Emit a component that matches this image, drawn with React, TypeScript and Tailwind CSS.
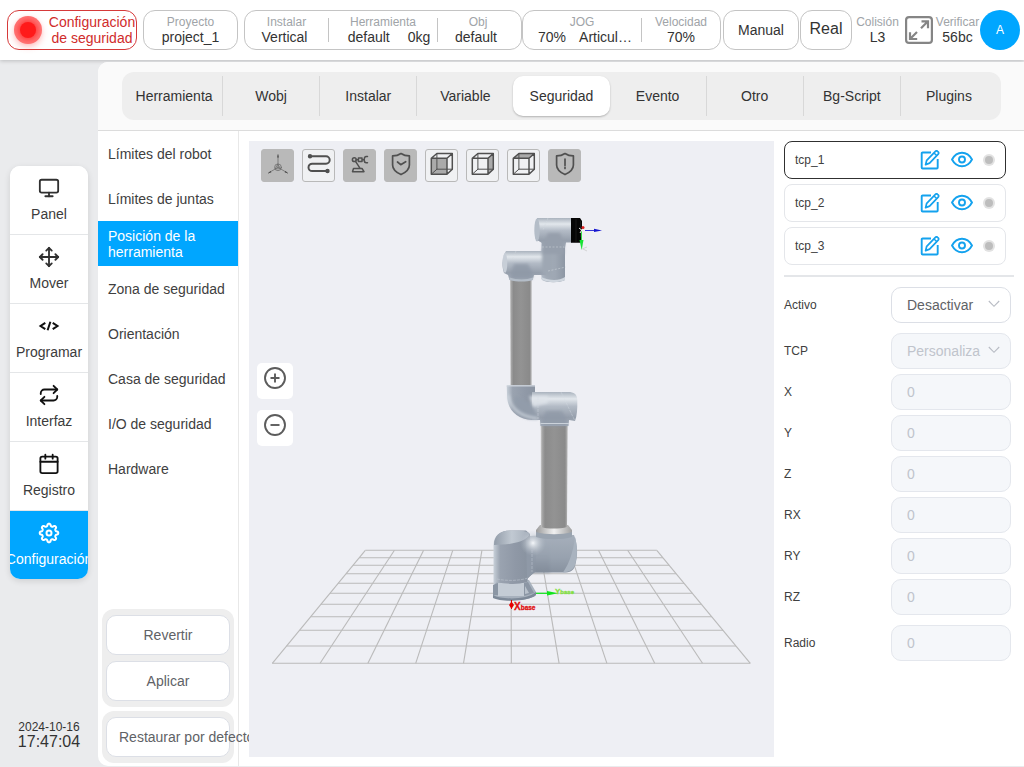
import React from "react";
import { Monitor, Move, Repeat } from "lucide-react";

const tabs = ["Herramienta", "Wobj", "Instalar", "Variable", "Seguridad", "Evento", "Otro", "Bg-Script", "Plugins"];
const menu = [
  "Límites del robot",
  "Límites de juntas",
  "Posición de la herramienta",
  "Zona de seguridad",
  "Orientación",
  "Casa de seguridad",
  "I/O de seguridad",
  "Hardware",
];

function CodeIcon() {
  return (
    <svg width="22" height="22" viewBox="0 0 22 22" fill="none" stroke="#111" strokeWidth="2">
      <path d="M7.300 7.800 2.500 11l4.800 3.200M14.700 7.800 19.500 11l-4.800 3.200M12.400 6.800 9.600 15.200" />
    </svg>
  );
}

function CalendarIcon() {
  return (
    <svg width="22" height="22" viewBox="0 0 24 24" fill="none" stroke="#111" strokeWidth="2" strokeLinecap="round" strokeLinejoin="round">
      <rect x="2.6" y="4" width="18.8" height="18" rx="2" />
      <path d="M2.6 9.500h18.8M8 1.800v4.400M16 1.800v4.400" />
    </svg>
  );
}

const gearPath = (() => {
  const pts: string[] = [];
  for (let i = 0; i < 160; i++) {
    const a = (i / 160) * Math.PI * 2;
    const wave = Math.tanh(1.8 * Math.cos(8 * a));
    const r = 8.1 + 1.2 * wave;
    pts.push(`${(11 + r * Math.cos(a)).toFixed(2)} ${(11 + r * Math.sin(a)).toFixed(2)}`);
  }
  return `M${pts.join("L")}Z`;
})();

function GearIcon() {
  return (
    <svg width="22" height="22" viewBox="0 0 22 22" fill="none" stroke="#fff" strokeWidth="2" strokeLinejoin="round">
      <path d={gearPath} />
      <circle cx="11" cy="11" r="2.500" />
    </svg>
  );
}

const nav = [
  { label: "Panel", icon: <Monitor size={22} color="#303030" /> },
  { label: "Mover", icon: <Move size={22} color="#303030" /> },
  { label: "Programar", icon: <CodeIcon /> },
  { label: "Interfaz", icon: <Repeat size={22} color="#111" /> },
  { label: "Registro", icon: <CalendarIcon /> },
  { label: "Configuración", icon: <GearIcon />, active: true },
];

function Stat({ label, value, className = "" }: { label: string; value: React.ReactNode; className?: string }) {
  return (
    <div className={`text-center whitespace-nowrap ${className}`}>
      <div className="text-xs leading-[15px] text-[#a0a4a8]">{label}</div>
      <div className="text-sm leading-[15px] text-[#333]">{value}</div>
    </div>
  );
}

function Divider() {
  return <div className="h-6 w-px shrink-0 bg-[#c4c4c4]" />;
}

function Header() {
  const box = "flex h-10 shrink-0 items-center rounded-xl border border-[#c4c4c4] bg-white";
  return (
    <header className="flex h-[60px] shrink-0 items-center bg-white pr-1 pl-[7px] shadow-[0_1px_4px_rgba(0,0,0,0.2)]">
      <button className="flex h-10 w-[130px] shrink-0 items-center gap-1.5 rounded-xl border border-[#d63a3a] bg-white pl-1.5 text-sm leading-4 text-[#d02c2c]">
        <span className="flex size-7 shrink-0 items-center justify-center rounded-full bg-[#ff7474] shadow-[0_3px_6px_rgba(255,80,80,0.35)]">
          <span className="size-4 rounded-full bg-[#ff1a1a] shadow-[0_0_5px_2px_#ff3c3c]" />
        </span>
        <span className="w-[88px] shrink-0">Configuración de seguridad</span>
      </button>
      <div className={`${box} ml-1.5 w-[95px] justify-center`}>
        <Stat label="Proyecto" value="project_1" />
      </div>
      <div className={`${box} ml-1.5 w-[278px]`}>
        <Stat className="w-[83px]" label="Instalar" value={<span className="pr-1">Vertical</span>} />
        <Divider />
        <Stat
          className="w-[108px]"
          label="Herramienta"
          value={
            <span className="flex justify-center gap-[18px] pl-3">
              <span>default</span>
              <span>0kg</span>
            </span>
          }
        />
        <Divider />
        <Stat className="w-20" label="Obj" value={<span className="pr-1">default</span>} />
      </div>
      <div className={`${box} w-[199px]`}>
        <Stat
          className="w-[118px]"
          label="JOG"
          value={
            <span className="flex justify-center gap-[13px] pl-1.5">
              <span>70%</span>
              <span>Articul…</span>
            </span>
          }
        />
        <Divider />
        <Stat className="flex-1" label="Velocidad" value="70%" />
      </div>
      <button className={`${box} ml-0.5 w-[76px] justify-center text-sm text-[#333]`}>Manual</button>
      <button className={`${box} ml-px w-[52px] justify-center pb-0.5 text-base text-[#333]`}>Real</button>
      <Stat className="ml-1 w-[43px]" label="Colisión" value="L3" />
      <button aria-label="Pantalla completa" className="ml-1.5 shrink-0">
        <svg width="28" height="28" viewBox="0 0 28 28" fill="none" stroke="#858585" strokeWidth="2.200">
          <rect x="1.100" y="1.100" width="25.800" height="25.800" rx="3" />
          <path d="M16.500 5.300H23v7M22.500 5.800 16 12.300M5 16.300V23h7.200M5.500 22.500l6.500-6.500" />
        </svg>
      </button>
      <Stat className="ml-0.5 w-[45px]" label="Verificar" value="56bc" />
      <button className="ml-auto size-10 shrink-0 rounded-full bg-[#00a6ff] text-xs text-white">A</button>
    </header>
  );
}

function Sidebar() {
  return (
    <aside className="flex w-[98px] shrink-0 flex-col items-center">
      <nav className="mt-[106px] w-[78px] overflow-hidden rounded-[10px] bg-white shadow-[0_2px_6px_rgba(0,0,0,0.12)]">
        {nav.map((n) => (
          <button
            key={n.label}
            className={
              n.active
                ? "flex h-[68px] w-full flex-col items-center bg-[#00a6ff] pt-[11px] text-sm text-white"
                : "flex h-[69px] w-full flex-col items-center border-b border-[#e4e6e8] bg-white pt-[11px] text-sm text-[#3c3c3c]"
            }
          >
            {n.icon}
            <span className="mt-[5px] leading-5">{n.label}</span>
          </button>
        ))}
      </nav>
      <div className="mt-auto pb-[17px] text-center text-[#333]">
        <div className="text-xs leading-[14px]">2024-10-16</div>
        <div className="text-base leading-4">17:47:04</div>
      </div>
    </aside>
  );
}

function SubMenu() {
  const btn = "block h-10 w-full rounded-[10px] border border-[#dcdfe6] bg-white text-sm text-[#606266] whitespace-nowrap";
  return (
    <div className="flex w-[141px] shrink-0 flex-col border-r border-[#e8e8e8]">
      <nav className="flex flex-col">
        {menu.map((m, i) => (
          <button
            key={m}
            className={
              i === 2
                ? "h-[45px] bg-[#00a6ff] px-2.5 text-left text-sm leading-4 text-white"
                : "h-[45px] px-2.5 text-left text-sm leading-4 text-[#404040]"
            }
          >
            {m}
          </button>
        ))}
      </nav>
      <div className="mx-1 mt-auto flex flex-col gap-1.5 rounded-xl bg-[#eee] px-1 py-1.5">
        <button className={btn}>Revertir</button>
        <button className={btn}>Aplicar</button>
      </div>
      <div className="mx-1 mt-1 mb-[3px] rounded-xl bg-[#eee] px-1 py-1.5">
        <button className={`${btn} pl-3 text-left`}>Restaurar por defecto</button>
      </div>
    </div>
  );
}

function Cube({ face }: { face: "front" | "right" | "top" }) {
  const faces = {
    front: "M6.3 9.3H22v15.9H6.3z",
    right: "M22 9.3l5.3-4.8v15.7L22 25.2z",
    top: "M6.3 9.3l5.6-4.8h15.4L22 9.3z",
  };
  return (
    <g strokeWidth="1.5">
      <path d={faces[face]} fill="#aaa" stroke="none" />
      <path d="M11.9 4.500v15.700h15.400M6.300 25.200l5.600-5" strokeWidth="1" />
      <path d="M6.300 9.300H22v15.900H6.300zM6.300 9.300l5.600-4.800h15.400L22 9.300M27.300 4.500v15.700L22 25.200" />
    </g>
  );
}

const shield = "M17 4.5c-2.6 1.8-5.4 2.4-8.4 2.4v9c0 4.6 3.6 7.4 8.4 9.7 4.800-2.300 8.400-5.100 8.400-9.700v-9c-3 0-5.800-.6-8.400-2.400z";

const tools = [
  {
    name: "Ejes",
    on: true,
    icon: (
      <g strokeWidth="0.7" stroke="#666">
        <path d="M17 18.300V6M17 18.300l-9.500 5.700M17 18.300l9.500 5.700" />
        <circle cx="17" cy="18.300" r="3.400" />
        <path d="M14.500 19.800h5L17 15.500z" />
        <path d="M17 4.800l-.8 3.700h1.600zM6.800 24.500l3.600-1.200-.9-1.400zM27.200 24.500l-3.600-1.200.9-1.400z" fill="#444" stroke="none" />
      </g>
    ),
  },
  {
    name: "Trayectoria",
    on: false,
    icon: (
      <g strokeWidth="2">
        <path d="M8 7.300h16a3.700 3.700 0 0 1 0 7.400H10.200a3.700 3.700 0 0 0 0 7.400H25.500" />
        <circle cx="8" cy="7.300" r="1.200" fill="#505050" />
        <circle cx="25.500" cy="22" r="1.200" fill="#505050" />
      </g>
    ),
  },
  {
    name: "Robot",
    on: true,
    icon: (
      <g strokeWidth="1.500">
        <path d="M10.500 19.500h8.500l2 3.200H9.500zM12.500 12.400l4.300 6.500" />
        <circle cx="11.300" cy="10.700" r="1.900" />
        <path d="M13.200 10.700h2M15.400 9h3.600v3.500h-3.600zM19.200 10.700h2M24.500 7.600h-1.200c-1.300 0-2.100 1-2.100 3.100s.8 3.100 2.100 3.100h1.200" />
      </g>
    ),
  },
  { name: "Escudo", on: true, icon: <path d={`${shield}M13.500 13l3.200 2.700 5-3`} strokeWidth="1.700" /> },
  { name: "Vista frontal", on: false, icon: <Cube face="front" /> },
  { name: "Vista lateral", on: false, icon: <Cube face="right" /> },
  { name: "Vista superior", on: false, icon: <Cube face="top" /> },
  { name: "Alerta", on: true, icon: <path d={`${shield}M17 10v6.500M17 18.300v1.200`} strokeWidth="1.700" /> },
];

const gridRows = [550.3, 557.7, 565.3, 573.7, 583.3, 593.3, 604.3, 616.7, 630.3, 646, 663.3];

function Scene() {
  return (
    <svg className="absolute inset-0 h-full w-full" viewBox="249 141 525 616" aria-label="Vista 3D del robot">
      <defs>
        <linearGradient id="tube" x1="0" x2="1" y1="0" y2="0">
          <stop offset="0" stopColor="#c9c9c9" />
          <stop offset=".07" stopColor="#a2a2a2" />
          <stop offset=".16" stopColor="#8b8b8b" />
          <stop offset=".5" stopColor="#939393" />
          <stop offset=".9" stopColor="#8a8a8a" />
          <stop offset="1" stopColor="#b9b9b9" />
        </linearGradient>
        <linearGradient id="horiz" x1="0" x2="0" y1="0" y2="1">
          <stop offset="0" stopColor="#aab3be" />
          <stop offset=".2" stopColor="#e2e7ec" />
          <stop offset=".42" stopColor="#b3bbc6" />
          <stop offset=".75" stopColor="#959eab" />
          <stop offset="1" stopColor="#a4adb9" />
        </linearGradient>
        <linearGradient id="vert" x1="0" x2="1" y1="0" y2="0">
          <stop offset="0" stopColor="#b4bdc8" />
          <stop offset=".2" stopColor="#a3acb8" />
          <stop offset=".6" stopColor="#9ea7b3" />
          <stop offset="1" stopColor="#8d97a4" />
        </linearGradient>
        <linearGradient id="column" x1="0" x2="1" y1="0" y2="0">
          <stop offset="0" stopColor="#c8d0d9" />
          <stop offset=".18" stopColor="#9aa3b0" />
          <stop offset=".6" stopColor="#8f98a6" />
          <stop offset="1" stopColor="#88929f" />
        </linearGradient>
        <linearGradient id="shoulder" x1="0" x2="0" y1="0" y2="1">
          <stop offset="0" stopColor="#a6afbb" />
          <stop offset=".5" stopColor="#98a2af" />
          <stop offset="1" stopColor="#7f8997" />
        </linearGradient>
        <linearGradient id="cap" x1="0" x2="1" y1="0" y2="0">
          <stop offset="0" stopColor="#929ca9" />
          <stop offset=".5" stopColor="#c1c9d2" />
          <stop offset="1" stopColor="#a6afbb" />
        </linearGradient>
        <linearGradient id="collar" x1="0" x2="1" y1="0" y2="0">
          <stop offset="0" stopColor="#9b9b9b" />
          <stop offset=".5" stopColor="#f0f0f0" />
          <stop offset="1" stopColor="#a0a0a0" />
        </linearGradient>
        <radialGradient id="shine">
          <stop offset="0" stopColor="#f4f7fa" />
          <stop offset="1" stopColor="#b4bdc8" stopOpacity="0" />
        </radialGradient>
        <filter id="soft" x="-30%" y="-30%" width="160%" height="160%">
          <feGaussianBlur stdDeviation="1.6" />
        </filter>
      </defs>

      <g stroke="#bababa" strokeWidth="1.100" fill="none">
        {gridRows.map((y) => {
          const t = (y - 550.3) / 113;
          return <line key={y} x1={365.3 - 93 * t} x2={656.8 + 93.5 * t} y1={y} y2={y} />;
        })}
        {Array.from({ length: 11 }, (_, i) => (
          <line key={i} x1={365.3 + 29.15 * i} y1="550.3" x2={272.3 + 47.8 * i} y2="663.3" />
        ))}
      </g>

      {/* base and shoulder */}
      <path d="M497 580L493 586V596C500 602 529 602 536 595V592L529 580z" fill="#a7b1bd" />
      <path d="M493 595C502 600 527 600 536 592V595C529 602 500 602 493 598z" fill="#7d8998" />
      <path d="M498 583H525V596H498z" fill="#c4ccd5" />
      <path d="M493 585l5-2v12h-5zM524 583l4-1 6 11-10 3z" fill="#8b96a4" />
      <path d="M525 586l4 7-4 1z" fill="#b8c1cb" />
      <path d="M526 536L574 535C578 545 578 556 575 566C573 571 570 572.500 564 572.500H534L526 580z" fill="url(#shoulder)" />
      <path d="M575 537C577.500 546 577.500 557 575 565C573 570 569 572 563 572.500C570 562 573 552 575 537z" fill="#a9b3bf" />
      <path d="M493.500 545C494 535 500 530.500 511 530.500H526L530 534V571L527 582C517 585 505 584 497 582L493.500 585z" fill="url(#column)" />
      <path d="M526 540H536V571.500L527 578z" fill="#8f99a7" />
      <path d="M532 536H550V572.500H533z" fill="url(#shoulder)" filter="url(#soft)" opacity=".7" />
      <path d="M494 545C494 535 501 530.500 511 530.500C521 530 530 531 529.500 535C525 542 510 545 494 545z" fill="url(#cap)" />
      <circle cx="533" cy="543" r="13" fill="url(#shine)" />
      <path d="M497 579C506 581 519 581 528 578M532 550V572" stroke="#c3cbd4" strokeWidth=".5" strokeDasharray="3 1" fill="none" />
      <path d="M536 531H572V537C562 540 546 540 536 537z" fill="#9aa4b0" />
      <path d="M540 525H568L572 530V532C562 535 546 535 536 532V530z" fill="url(#collar)" />

      {/* lower arm */}
      <path d="M540.700 424H567.700L567 527C560 529 547 529 541 527z" fill="url(#tube)" />

      {/* elbow */}
      <path d="M506.700 385.500H535V392L540 398V420H532C517 419 507 410 507 395z" fill="url(#column)" />
      <path d="M532 392H568C574 392 577 394 577.300 400C577.500 409 577 416 575 421L569 420L568.500 426H540.500L540 420H532z" fill="url(#horiz)" />
      <path d="M515 396L532 404L538 419H531C520 418 513 410 515 396z" fill="#929caa" filter="url(#soft)" />
      <path d="M529 396H548V403L533 407z" fill="#dfe4ea" filter="url(#soft)" opacity=".8" />
      <path d="M546 411H562L567 420V426H542V419z" fill="#8f99a7" opacity=".75" filter="url(#soft)" />
      <path d="M508.500 395C510 408 520 417 538 418.500" stroke="#d2d9e1" strokeWidth="2" fill="none" filter="url(#soft)" />
      <path d="M540.500 423.500H569M506.700 386H535" stroke="#cbd2da" strokeWidth="1" />
      <path d="M561 392L575 421M538 397V419" stroke="#d5dbe2" strokeWidth=".4" strokeDasharray="3 1" />

      {/* upper arm and wrist */}
      <path d="M510 279H531.700V385H510.500z" fill="url(#tube)" />
      <path d="M541.500 237H565V280C559 283 547 283 542 280L541 273z" fill="url(#vert)" />
      <path d="M506 251H546V275H534L532.700 280H509.500L508 275L504 273C501.500 265 501.500 257 506 251z" fill="url(#horiz)" />
      <path d="M514 264H528L533 274L532 279H511V273z" fill="#8f99a7" opacity=".8" filter="url(#soft)" />
      <path d="M542 250L552 247V278L542 274z" fill="#9ea7b3" filter="url(#soft)" />
      <ellipse cx="505" cy="263" rx="2.300" ry="10" fill="#c7ced7" />
      <path d="M509.500 277.500C517 280 526 280 533 277.500V280C526 282 517 282 509.500 280z" fill="#b4bdc8" />
      <path d="M541 277C550 281 559 281 565 277V280C559 283 547 283 541 279z" fill="#cfd6de" />
      <path d="M537 218H572V242.500H566L565 248H542V243L537 240z" fill="url(#horiz)" />
      <path d="M548 233H560L564 243V254H543V244z" fill="#969fac" filter="url(#soft)" />
      <ellipse cx="537" cy="230" rx="2.700" ry="11.500" fill="#b4bdc8" />
      <path d="M548 218l-5 12M516 251l-4 9M542 247h22M548 271l18-4" stroke="#d2d8df" strokeWidth=".5" strokeDasharray="2 1.500" />
      <path d="M571 218H580L582 221V239L580 242.700H571z" fill="#050505" />
      <path d="M576 219V242M580.500 221v16" stroke="#252525" strokeWidth=".6" />

      {/* tool axes */}
      <path d="M585 230.500H594" stroke="#3535d8" strokeWidth="1" />
      <path d="M594 228.700L602 230.500L594 232z" fill="#1515cf" />
      <path d="M581.500 231V242" stroke="#31d944" strokeWidth="1" />
      <path d="M579.500 240H583.500L581.700 250z" fill="#18e334" />
      <path d="M579 228l5 4M580 233l3-5" stroke="#eee" strokeWidth="1" />
      <circle cx="583" cy="227.500" r="1.500" fill="#df2020" />
      <path d="M582 249l5-2M583 249l4 2" stroke="#ccc" strokeWidth=".8" />

      {/* base axes */}
      <path d="M536 593.300H548" stroke="#10e51c" strokeWidth="1.200" />
      <path d="M547 591L558 593.300L547 595.500z" fill="#10e51c" />
      <path d="M511.500 600V609" stroke="#e60000" strokeWidth="1" />
      <path d="M511.500 601.500L514 605L511.500 609L509 605z" fill="#e60000" />
      <g fontFamily="Liberation Sans, sans-serif" fontWeight="bold">
        <text x="514" y="609.500" fontSize="10" fill="#e01010" stroke="#e01010" strokeWidth=".3">
          X<tspan fontSize="6.500">base</tspan>
        </text>
        <text x="555" y="594" fontSize="8" fill="#83df42" stroke="#83df42" strokeWidth=".3">
          Y<tspan fontSize="6">base</tspan>
        </text>
      </g>
    </svg>
  );
}

function Viewport() {
  return (
    <section className="relative mt-2.5 mb-[9px] ml-2.5 min-w-0 flex-1 bg-[#eeeff4]">
      <Scene />
      <div className="absolute top-2 left-3 flex gap-2">
        {tools.map((t) => (
          <button
            key={t.name}
            aria-label={t.name}
            className={
              t.on
                ? "size-[33px] rounded-[3px] border border-[#b9b9b9] bg-[#b9b9b9]"
                : "size-[33px] rounded-[3px] border border-[#b9b9b9] bg-[#f0f1f3]"
            }
          >
            <svg width="31" height="31" viewBox="1 1 31 31" fill="none" stroke="#505050" strokeLinecap="round" strokeLinejoin="round">
              {t.icon}
            </svg>
          </button>
        ))}
      </div>
      <div className="absolute top-[222px] left-2 flex flex-col gap-[11px]">
        {["M11 6.500v9M6.500 11h9", "M6.500 11h9"].map((d, i) => (
          <button key={d} aria-label={i === 0 ? "Acercar" : "Alejar"} className="flex size-9 justify-center rounded-[5px] bg-white pt-1">
            <svg width="22" height="22" viewBox="0 0 22 22" fill="none" stroke="#5c5c5c" strokeWidth="1.900">
              <circle cx="11" cy="11" r="10" />
              <path d={d} />
            </svg>
          </button>
        ))}
      </div>
    </section>
  );
}

function TcpRow({ name, selected }: { name: string; selected: boolean }) {
  return (
    <div
      className={
        selected
          ? "flex h-[38px] items-center rounded-lg border border-[#303030] px-2.5 text-xs text-[#404040]"
          : "flex h-[38px] items-center rounded-lg border border-[#e4e6ea] px-2.5 text-xs text-[#404040]"
      }
    >
      <span className="flex-1">{name}</span>
      <button aria-label={`Editar ${name}`}>
        <svg width="20" height="20" viewBox="0 0 20 20" fill="none" stroke="#14a2ee" strokeWidth="1.900" strokeLinejoin="round">
          <path d="M11 2.500H2.600a.9.900 0 0 0-.9.900v14.200c0 .5.400.9.900.9h14.200c.5 0 .9-.4.900-.9V9" />
          <path d="M5.600 14.600l1.100-4.300 8.700-9a1.500 1.500 0 0 1 2.200 0l.6.600a1.500 1.500 0 0 1 0 2.200l-8.600 9z" strokeWidth="1.700" />
          <path d="M14 3l2.900 2.800" strokeWidth="1.500" />
        </svg>
      </button>
      <button aria-label={`Mostrar ${name}`} className="ml-[11px]">
        <svg width="22" height="20" viewBox="0 0 22 20" fill="none" stroke="#14a2ee" strokeWidth="1.900" strokeLinejoin="round">
          <path d="M1 9.500C3.500 4.900 7 2.700 11 2.700s7.500 2.200 10 6.800c-2.500 4.600-6 6.800-10 6.800S3.500 14.100 1 9.500z" />
          <circle cx="11" cy="9.500" r="3" />
        </svg>
      </button>
      <span className="ml-2.5 flex size-3 items-center justify-center rounded-full bg-[#e2e2e2]">
        <span className="size-2 rounded-full bg-[#bdbdbd]" />
      </span>
    </div>
  );
}

function Field({ label, children, className = "" }: { label: string; children: React.ReactNode; className?: string }) {
  return (
    <div className={`mr-[3px] flex items-center justify-between ${className}`}>
      <label htmlFor={label} className="text-xs text-[#404040]">
        {label}
      </label>
      <div className="relative w-[120px]">{children}</div>
    </div>
  );
}

function Chevron() {
  return (
    <svg className="pointer-events-none absolute top-3 right-[11px] h-2.5 w-3" viewBox="0 0 12 10" fill="none" stroke="#b8bcc4" strokeWidth="1.100">
      <path d="M.8 2L6 7.300 11.200 2" />
    </svg>
  );
}

function Properties() {
  const disabled = "block h-9 w-full appearance-none rounded-[10px] border border-[#e4e7ed] bg-[#f5f7fa] pl-[15px] text-sm text-[#c0c4cc] opacity-100";
  return (
    <aside className="mx-2.5 mt-2.5 w-[230px] shrink-0">
      <div className="mr-2 flex flex-col gap-[5px]">
        {["tcp_1", "tcp_2", "tcp_3"].map((n, i) => (
          <TcpRow key={n} name={n} selected={i === 0} />
        ))}
      </div>
      <div className="mt-2.5 mb-2.5 h-0.5 bg-[#e4e6e9]" />
      <Field label="Activo">
        <select id="Activo" className="block h-9 w-full appearance-none rounded-[10px] border border-[#dcdfe6] bg-white pl-[15px] text-sm text-[#606266]">
          <option>Desactivar</option>
        </select>
        <Chevron />
      </Field>
      <Field label="TCP" className="mt-2.5">
        <select id="TCP" disabled className={disabled}>
          <option>Personaliza</option>
        </select>
        <Chevron />
      </Field>
      {["X", "Y", "Z", "RX", "RY", "RZ"].map((l) => (
        <Field key={l} label={l} className="mt-[5px]">
          <input id={l} disabled defaultValue="0" className={disabled} />
        </Field>
      ))}
      <Field label="Radio" className="mt-2.5">
        <input id="Radio" disabled defaultValue="0" className={disabled} />
      </Field>
    </aside>
  );
}

export default function App() {
  return (
    <div className="flex min-h-screen flex-col bg-[#eaebed] font-['Liberation_Sans',Arial,sans-serif]">
      <Header />
      <div className="flex flex-1">
        <Sidebar />
        <main className="mt-0.5 mb-px flex min-w-0 flex-1 flex-col overflow-hidden rounded-l-[10px] bg-white">
          <div className="border-b border-[#dcdcdc] bg-[#fafafa] pt-2.5 pr-[23px] pb-2.5 pl-6">
            <nav className="flex rounded-xl bg-[#eee] p-1">
              {tabs.map((t, i) => (
                <button
                  key={t}
                  className={
                    i === 4
                      ? "h-10 flex-1 basis-0 rounded-[10px] bg-white text-sm text-[#333] shadow-[0_1px_2px_rgba(0,0,0,0.25)]"
                      : i === 8 || i === 3
                        ? "h-10 flex-1 basis-0 text-sm text-[#333]"
                        : "h-10 flex-1 basis-0 border-r border-[#d8d8d8] text-sm text-[#333]"
                  }
                >
                  {t}
                </button>
              ))}
            </nav>
          </div>
          <div className="flex flex-1">
            <SubMenu />
            <Viewport />
            <Properties />
          </div>
        </main>
      </div>
    </div>
  );
}
